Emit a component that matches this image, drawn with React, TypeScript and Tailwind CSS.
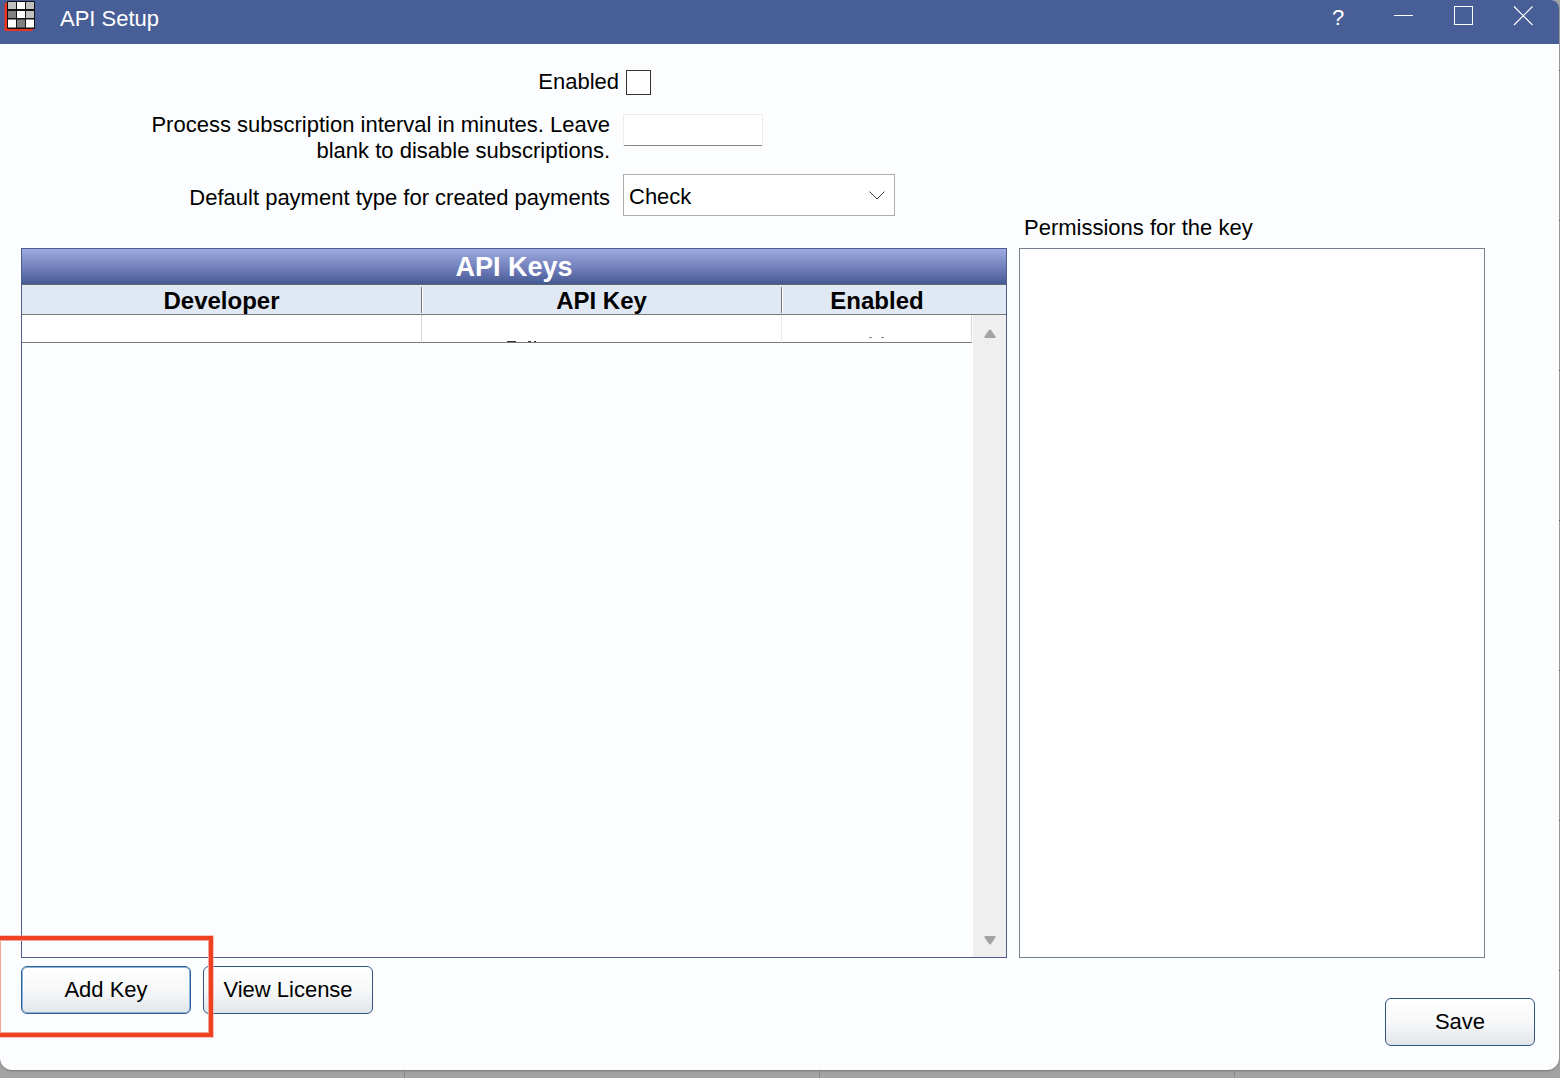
import { useState } from 'react';
import type { ReactNode } from 'react';

interface DialogButtonProps {
  children: ReactNode;
  width: string;
  focused?: boolean;
}

const columns = [
  { label: 'Developer', width: 'w-[400px]' },
  { label: 'API Key', width: 'w-[360px]' },
  { label: 'Enabled', width: 'w-auto' },
];

function DialogButton({ children, width, focused }: DialogButtonProps) {
  return (
    <button
      type="button"
      className={`h-12 rounded-md border bg-linear-to-b from-white via-[#f7f8f9] to-[#e1e6e9] pb-px text-[22px] leading-[26px] text-black ${width} ${
        focused
          ? 'border-[#2d5f9a] shadow-[inset_0_0_0_1px_#8db3d6]'
          : 'border-[#2f5587]'
      }`}
    >
      {children}
    </button>
  );
}

function AppIcon() {
  return (
    <svg width="32" height="32" viewBox="0 0 32 32">
      <path d="M3 1.5L0.5 4V31H28L30.5 28Z" fill="#ea3323" />
      <rect x="3" y="1" width="28" height="28" rx="1" fill="#111" />
      <rect x="4" y="2" width="8" height="7" fill="#c0c0c0" />
      <rect x="13" y="2" width="8" height="7" fill="#fff" />
      <rect x="22" y="2" width="8" height="7" fill="#c0c0c0" />
      <rect x="4" y="11" width="8" height="7" fill="#808080" />
      <rect x="13" y="11" width="8" height="7" fill="#fff" />
      <rect x="22" y="11" width="8" height="7" fill="#c0c0c0" />
      <rect x="4" y="19.5" width="8" height="8" fill="#fff" />
      <rect x="13" y="19.5" width="8" height="8" fill="#808080" />
      <rect x="22" y="19.5" width="8" height="8" fill="#fff" />
    </svg>
  );
}

function TitleBar() {
  return (
    <header className="flex h-11 items-start justify-between bg-[#485e96] pl-1 pr-[26px] text-white">
      <div className="flex items-start gap-6">
        <AppIcon />
        <h1 className="pt-[6px] text-[22px] leading-[26px]">API Setup</h1>
      </div>
      <div className="flex items-start gap-10 pt-[6px]">
        <button type="button" aria-label="Help" className="w-7 pr-[2px] text-[22px] leading-[24px]">
          ?
        </button>
        <button type="button" aria-label="Minimize" className="w-5">
          <svg width="20" height="20" viewBox="0 0 20 20">
            <path d="M1 9.5H20" stroke="#fff" />
          </svg>
        </button>
        <button type="button" aria-label="Maximize" className="w-5">
          <svg width="20" height="20" viewBox="0 0 20 20">
            <rect x="1.5" y="0.5" width="18" height="18" fill="none" stroke="#fff" />
          </svg>
        </button>
        <button type="button" aria-label="Close" className="w-5">
          <svg width="20" height="20" viewBox="0 0 20 20">
            <path d="M1 0.5L19.5 19M19.5 0.5L1 19" stroke="#fff" strokeWidth="1.2" />
          </svg>
        </button>
      </div>
    </header>
  );
}

function SettingsForm() {
  const [enabled, setEnabled] = useState(false);
  const [interval, setInterval] = useState('');

  return (
    <form className="pb-8 pt-[25px]">
      <div className="flex items-center gap-[7px]">
        <label htmlFor="enabled" className="w-[598px] text-right">
          Enabled
        </label>
        <input
          id="enabled"
          type="checkbox"
          checked={enabled}
          onChange={(e) => setEnabled(e.target.checked)}
          className="mt-px size-[25px] appearance-none border border-[#333] bg-white checked:bg-[#485e96]"
        />
      </div>

      <div className="mt-[17px] flex items-start gap-[13px]">
        <div className="flex w-[589px] justify-end">
          <label htmlFor="interval" className="w-[470px] text-right">
            Process subscription interval in minutes. Leave blank to disable subscriptions.
          </label>
        </div>
        <input
          id="interval"
          type="text"
          value={interval}
          onChange={(e) => setInterval(e.target.value)}
          className="mt-[2px] h-8 w-[140px] rounded-xs border border-[#ececec] border-b-[#868686] bg-white px-1 outline-none"
        />
      </div>

      <div className="mt-[10px] flex items-center gap-[13px]">
        <label htmlFor="payment-type" className="w-[589px] pt-[6px] text-right">
          Default payment type for created payments
        </label>
        <div className="relative">
          <select
            id="payment-type"
            className="block h-[42px] w-[272px] appearance-none border border-[#adadad] bg-white pl-[5px] pt-1 outline-none"
          >
            <option>Check</option>
          </select>
          <svg
            width="16"
            height="9"
            viewBox="0 0 16 9"
            className="pointer-events-none absolute right-[10px] top-[17px]"
          >
            <path d="M0.5 0.5L8 8L15.5 0.5" fill="none" stroke="#444" />
          </svg>
        </div>
      </div>
    </form>
  );
}

function ScrollBar() {
  return (
    <div className="ml-px flex flex-1 flex-col justify-between bg-[#efefef]">
      <button type="button" aria-label="Scroll up" className="flex h-[38px] items-center justify-center">
        <svg width="12" height="10" viewBox="0 0 12 10">
          <path d="M5 1Q6 0 7 1L11.5 7.5Q12 9 10.5 9H1.5Q0 9 0.5 7.5Z" fill="#a3a3a3" />
        </svg>
      </button>
      <button type="button" aria-label="Scroll down" className="flex h-[34px] items-center justify-center">
        <svg width="12" height="10" viewBox="0 0 12 10">
          <path d="M5 9Q6 10 7 9L11.5 2.5Q12 1 10.5 1H1.5Q0 1 0.5 2.5Z" fill="#a3a3a3" />
        </svg>
      </button>
    </div>
  );
}

function KeysGrid() {
  return (
    <section className="flex flex-col border border-[#4d5f91]">
      <h2 className="h-9 border-b border-[#5f6472] bg-linear-to-b from-[#9eabe0] via-[#6876b3] via-65% to-[#435a92] text-center text-[27px] font-bold leading-[36px] text-white">
        API Keys
      </h2>
      <div className="flex flex-1">
        <div className="flex-1">
          <table className="w-full table-fixed border-separate border-spacing-0">
            <thead>
              <tr>
                {columns.map((column, i) => (
                  <th
                    key={column.label}
                    scope="col"
                    className={`h-[30px] border-b border-[#787878] bg-[#e0e8f3] p-0 text-[24px] leading-[26px] font-bold ${column.width}`}
                  >
                    <div className="flex items-center">
                      <span className="flex-1 pt-[3px]">{column.label}</span>
                      {i < 2 && <span className="h-[26px] w-px bg-[#787878] shadow-[1px_0_0_#fff]" />}
                    </div>
                  </th>
                ))}
              </tr>
            </thead>
            <tbody>
              <tr>
                <td className="h-7 border-b border-r border-b-[#787878] border-r-[#d8d8d8] bg-white p-0" />
                <td className="h-7 border-b border-r border-b-[#787878] border-r-[#ececec] bg-white p-0 align-bottom">
                  {/* descenders of the key, cut off by the row */}
                  <svg width="32" height="1" viewBox="0 0 32 1" className="ml-[85px] block">
                    <path d="M0 0h9v1h-9zM21 0h3v1h-3zM27 0h2v1h-2z" fill="#333" />
                  </svg>
                </td>
                <td className="h-7 border-b border-r border-b-[#787878] border-r-[#d8d8d8] bg-white p-0 align-bottom">
                  <svg width="17" height="5" viewBox="0 0 17 5" className="mx-auto block">
                    <path d="M1 0.5h3M13 0.5h3" stroke="#888" />
                  </svg>
                </td>
              </tr>
            </tbody>
          </table>
        </div>
        <div className="flex w-[34px] flex-col">
          <div className="h-[30px] border-b border-[#787878] bg-[#e0e8f3]" />
          <ScrollBar />
        </div>
      </div>
    </section>
  );
}

export default function App() {
  return (
    <div className="flex min-h-screen flex-col bg-[#a3a3a3] bg-[linear-gradient(to_right,transparent_404px,#888_404px,#888_405px,transparent_405px),linear-gradient(to_bottom,transparent_70px,#444_70px,#444_71px,transparent_71px)] bg-size-[415px_100%,100%_150px] pb-2 pr-px font-['Liberation_Sans',Arial,sans-serif] text-[22px] leading-[26px] text-black">
      <div className="flex flex-1 flex-col overflow-hidden rounded-b-xl rounded-tr-lg bg-[#fcfdff] shadow-[0_1px_2px_#777]">
        <TitleBar />

        <main className="grid flex-1 grid-cols-[1fr_466px] grid-rows-[auto_1fr] gap-x-3 pl-[21px] pr-[74px]">
          <SettingsForm />
          <h2 id="permissions-label" className="self-end pb-[7px] pl-[5px]">
            Permissions for the key
          </h2>
          <KeysGrid />
          <ul aria-labelledby="permissions-label" className="border border-[#74808c] bg-white" />
        </main>

        <footer className="flex items-start justify-between pb-6 pl-[21px] pr-6">
          <div className="flex gap-3 pt-2">
            <div className="relative">
              <DialogButton width="w-[170px]" focused>
                Add Key
              </DialogButton>
              {/* highlight around the button */}
              <div className="pointer-events-none absolute -left-[21px] -top-[30px] z-10 h-[101px] w-[213px] border-y-4 border-r-4 border-[#ee4023] shadow-[0_0_0_1px_#f5a59699,inset_0_0_0_1px_#f5a596]" />
            </div>
            <DialogButton width="w-[170px]">View License</DialogButton>
          </div>
          <div className="pt-10">
            <DialogButton width="w-[150px]">Save</DialogButton>
          </div>
        </footer>
      </div>
    </div>
  );
}
